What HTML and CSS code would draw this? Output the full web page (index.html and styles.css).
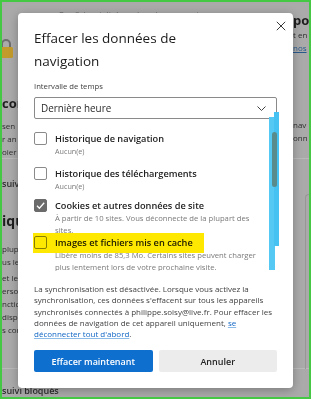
FILE: index.html
```html
<!DOCTYPE html>
<html lang="fr">
<head>
<meta charset="utf-8">
<title>Effacer les données de navigation</title>
<link rel="stylesheet" href="styles.css">
</head>
<body>
<div class="frame">
  <div class="page">
    <div class="bg">
      <div class="bg-sec bg-top">
        <div class="bg-col bg-left">
          <svg class="lock" width="14" height="21" viewBox="0 0 14 21">
            <path d="M3 9 V6 a4 4 0 0 1 8 0 V9" fill="none" stroke="#6e6e6e" stroke-width="2"/>
            <rect x="0" y="9" width="14" height="11" rx="1.5" fill="#c39b2c"/>
          </svg>
          <div class="frag frag-h f-con">con</div>
          <div class="frag f-sen">sen</div>
          <div class="frag">r an</div>
          <div class="frag">oier</div>
        </div>
        <div class="bg-col bg-mid">
          <div class="frag faint">Confidentialité, recherche et services</div>
        </div>
        <div class="bg-col bg-right">
          <div class="frag frag-h f-pou">pou</div>
          <div class="frag">t en</div>
          <div class="frag frag-link">nos</div>
          <div class="frag f-nav">nav</div>
          <div class="frag">onn</div>
        </div>
      </div>
      <div class="bg-sec bg-body">
        <div class="bg-col bg-left">
          <div class="frag frag-s f-suiv">suiv</div>
          <div class="frag frag-h f-iqu">iqu</div>
          <div class="frag f-plup">plup</div>
          <div class="frag">us le</div>
          <div class="frag f-gap">et le</div>
          <div class="frag">erso</div>
          <div class="frag">nctic</div>
          <div class="frag">dispo</div>
          <div class="frag">s cor</div>
        </div>
        <div class="bg-col bg-right">
          <div class="bg-card"></div>
        </div>
      </div>
      <div class="bg-sec bg-bottom">
        <div class="frag frag-s">suivi bloqués</div>
      </div>
    </div>

    <div class="dialog" role="dialog" aria-labelledby="dlg-title">
      <header class="dlg-head">
        <h1 class="dlg-title" id="dlg-title">Effacer les données de navigation</h1>
        <button class="close" aria-label="Fermer">
          <svg width="10" height="10" viewBox="0 0 10 10"><path d="M0.8 0.8 L9.2 9.2 M9.2 0.8 L0.8 9.2" stroke="#3a3a3a" stroke-width="1" fill="none"/></svg>
        </button>
      </header>

      <div class="field-label">Intervalle de temps</div>
      <div class="select">
        <span>Dernière heure</span>
        <svg width="9" height="5" viewBox="0 0 9 5"><path d="M0.5 0.5 L4.5 4.5 L8.5 0.5" stroke="#444" stroke-width="1" fill="none"/></svg>
      </div>

      <div class="list">
        <div class="item item-1">
          <span class="cb"></span>
          <div class="item-text">
            <div class="item-title">Historique de navigation</div>
            <div class="item-sub">Aucun(e)</div>
          </div>
        </div>
        <div class="item item-2">
          <span class="cb"></span>
          <div class="item-text">
            <div class="item-title">Historique des téléchargements</div>
            <div class="item-sub">Aucun(e)</div>
          </div>
        </div>
        <div class="item item-3">
          <span class="cb cb-on">
            <svg width="13" height="13" viewBox="0 0 13 13"><path d="M3 6.8 L5.4 9.2 L10.2 3.8" stroke="#fff" stroke-width="1.3" fill="none"/></svg>
          </span>
          <div class="item-text">
            <div class="item-title">Cookies et autres données de site</div>
            <div class="item-desc">À partir de 10 sites. Vous déconnecte de la plupart des sites.</div>
          </div>
        </div>
        <div class="item item-4">
          <span class="cb"></span>
          <div class="item-text">
            <div class="item-title">Images et fichiers mis en cache</div>
            <div class="item-desc">Libère moins de 85,3 Mo. Certains sites peuvent charger plus lentement lors de votre prochaine visite.</div>
          </div>
        </div>
      </div>

      <p class="sync">La synchronisation est désactivée. Lorsque vous activez la synchronisation, ces données s'effacent sur tous les appareils synchronisés connectés à philippe.soisy@live.fr. Pour effacer les données de navigation de cet appareil uniquement, <a class="link" href="#">se déconnecter tout d'abord</a>.</p>

      <div class="actions">
        <button class="btn btn-primary">Effacer maintenant</button>
        <button class="btn">Annuler</button>
      </div>

      <div class="mark mark-yellow"></div>
      <div class="mark mark-cyan-a"></div>
      <div class="mark mark-cyan-b"></div>
      <div class="thumb"></div>
    </div>
  </div>
</div>
</body>
</html>
```

FILE: styles.css
```css
html, body {
  margin: 0;
  padding: 0;
}

body {
  font-family: "Open Sans", "Noto Sans", sans-serif;
  background: #fff;
}

.frame {
  width: 311px;
  height: 399px;
  box-sizing: border-box;
  border: 2px solid #45c945;
  overflow: hidden;
}

.page {
  position: relative;
  width: 100%;
  height: 100%;
  background: #aaaaaa;
  overflow: hidden;
  color: #2e2e2e;
}

/* ---------- dimmed page behind the dialog ---------- */
.bg {
  display: flex;
  flex-direction: column;
  height: 100%;
}

.bg-sec {
  display: grid;
  grid-template-columns: 48px 1fr 16px;
}

.bg-top {
  height: 168px;
  border-bottom: 1px solid #b9b9b9;
}

.bg-body {
  height: 209px;
  border-bottom: 1px solid #b9b9b9;
}

.bg-bottom {
  display: block;
  padding-top: 15px;
}

.bg-col {
  display: flex;
  flex-direction: column;
  min-width: 0;
}

.frag {
  font-size: 8px;
  line-height: 13px;
  white-space: nowrap;
}

.frag-h {
  font-size: 13px;
  line-height: 16px;
  font-weight: 700;
  color: #1e1e1e;
}

.frag-s {
  font-size: 9px;
  font-weight: 600;
}

.frag-link {
  color: #2a5a8c;
  text-decoration: underline;
}

.faint {
  font-size: 9px;
  color: #6f6f6f;
  padding-left: 8px;
  margin-top: 7px;
}

.lock {
  margin-top: 36px;
  margin-left: -3px;
}

.f-con { margin-top: 36px; }
.f-sen { margin-top: 8px; }

.f-pou { margin-top: 10px; }
.f-nav { margin-top: 64px; }

.f-suiv { margin-top: 18px; }
.f-iqu { margin-top: 22px; font-size: 14px; line-height: 18px; }
.f-plup { margin-top: 12px; }
.f-gap { margin-top: 3px; }

.bg-right {
  grid-column: 3;
}

.bg-card {
  margin-top: 35px;
  margin-left: 12px;
  height: 174px;
  border-left: 1px solid #979797;
  border-top: 1px solid #979797;
  border-top-left-radius: 4px;
}

/* ---------- dialog ---------- */
.dialog {
  position: absolute;
  left: 16px;
  top: 11px;
  width: 275px;
  height: 375px;
  box-sizing: border-box;
  background: #fff;
  border-radius: 4px;
  box-shadow: 0 2px 10px rgba(0, 0, 0, 0.28);
  padding: 0 16px 16px;
  display: flex;
  flex-direction: column;
  color: #1b1b1b;
}

.dlg-head {
  display: flex;
  justify-content: space-between;
  align-items: flex-start;
  margin-top: 14px;
}

.dlg-title {
  margin: 0;
  width: 190px;
  font-size: 13.5px;
  line-height: 23px;
  font-weight: 400;
}

.close {
  margin: -6px -9px 0 0;
  padding: 0;
  border: 0;
  background: none;
  width: 10px;
  height: 10px;
  display: flex;
}

.field-label {
  margin-top: 7px;
  font-size: 7.7px;
  line-height: 12px;
  color: #404040;
}

.select {
  margin-top: 5px;
  height: 22px;
  box-sizing: border-box;
  border: 1px solid #8a8a8a;
  border-radius: 2px;
  display: flex;
  align-items: center;
  justify-content: space-between;
  padding: 0 10px 0 6px;
  font-size: 9.9px;
  color: #2a2a2a;
}

.list {
  height: 152px;
  box-sizing: border-box;
  padding-top: 13px;
  overflow: hidden;
  flex: none;
}

.item {
  display: grid;
  grid-template-columns: 13px 212px;
  column-gap: 8px;
  align-items: start;
}

.item-1 { margin-bottom: 10px; }
.item-2 { margin-bottom: 7px; }
.item-3 { margin-bottom: 0; }

.cb {
  width: 13px;
  height: 13px;
  box-sizing: border-box;
  border: 1px solid #8a8a8a;
  border-radius: 2px;
  background: #fff;
  display: flex;
}

.cb-on {
  background: #6b6b6b;
  border-color: #6b6b6b;
}

.cb-on svg {
  margin: -1px;
}

.item-title {
  font-size: 9.2px;
  line-height: 13px;
  font-weight: 600;
  color: #222;
}

.item-sub {
  font-size: 7.2px;
  line-height: 12px;
  color: #7a7a7a;
}

.item-desc {
  font-size: 7.7px;
  line-height: 12px;
  color: #7a7a7a;
}

.sync {
  margin: 12px 0 0;
  font-size: 8px;
  line-height: 11.25px;
  color: #424242;
}

.link {
  color: #1166c4;
  text-decoration: underline;
  text-decoration-color: #8dbbe8;
  text-underline-offset: 1px;
}

.actions {
  margin-top: auto;
  display: grid;
  grid-template-columns: 1fr 1fr;
  column-gap: 6px;
}

.btn {
  height: 22px;
  border: 0;
  border-radius: 2px;
  background: #ececec;
  color: #242424;
  font-family: inherit;
  font-size: 9px;
  font-weight: 600;
  padding: 0;
}

.btn-primary {
  background: #0f6fcf;
  color: #fff;
}

/* ---------- annotation marks drawn on the screenshot ---------- */
.mark {
  position: absolute;
}

.mark-yellow {
  left: 15px;
  top: 220px;
  width: 171px;
  height: 20px;
  background: #ffe800;
  mix-blend-mode: multiply;
}

.mark-cyan-a {
  left: 251px;
  top: 104px;
  width: 6px;
  height: 153px;
  background: #55c9f3;
}

.mark-cyan-b {
  left: 256px;
  top: 99px;
  width: 5px;
  height: 134px;
  background: #45c2f1;
}

.thumb {
  position: absolute;
  left: 254px;
  top: 119px;
  width: 5px;
  height: 55px;
  border-radius: 3px;
  background: #5a8b8c;
}
```
